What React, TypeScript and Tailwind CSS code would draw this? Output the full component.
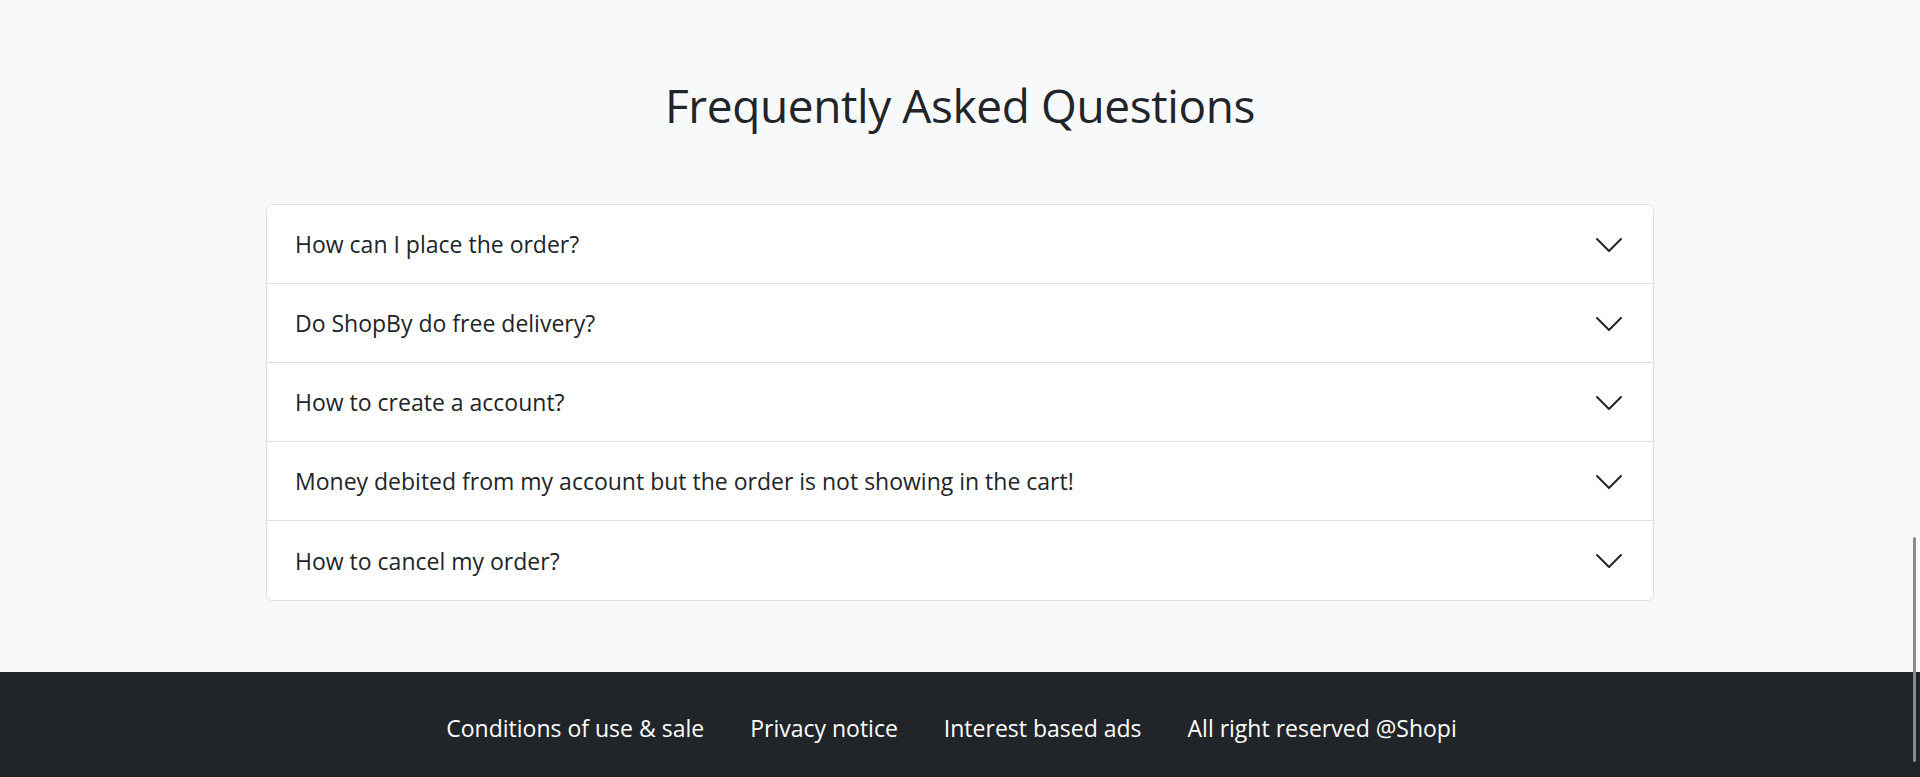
const faqs = [
  "How can I place the order?",
  "Do ShopBy do free delivery?",
  "How to create a account?",
  "Money debited from my account but the order is not showing in the cart!",
  "How to cancel my order?",
]

const footerLinks = [
  "Conditions of use & sale",
  "Privacy notice",
  "Interest based ads",
  "All right reserved @Shopi",
]

function Chevron() {
  return (
    <svg
      viewBox="0 0 16 16"
      className="w-8 h-8 shrink-0"
      fill="none"
      stroke="#212529"
      strokeWidth={1}
      strokeLinecap="round"
      strokeLinejoin="round"
    >
      <path d="M2 5L8 11L14 5" />
    </svg>
  )
}

export default function App() {
  return (
    <div
      className="relative min-h-[777px] flex flex-col bg-[#f8f9fa] text-[#212529]"
      style={{ fontFamily: '"Open Sans", "Noto Sans", sans-serif' }}
    >
      {/* FAQ section */}
      <section className="flex-1 pt-[78px] pb-[70px]">
        <h1 className="text-center text-[46px] leading-[1.2] tracking-[-0.4px] font-normal">
          Frequently Asked Questions
        </h1>

        <div className="mt-[71px] mx-auto w-[1388px] bg-white border border-[#dee2e6] rounded-md divide-y divide-[#dee2e6]">
          {faqs.map((q) => (
            <button
              key={q}
              className="w-full h-[79px] flex items-center justify-between pl-[28px] pr-[28px] pt-px text-left text-[23px]"
            >
              <span>{q}</span>
              <Chevron />
            </button>
          ))}
        </div>
      </section>

      {/* Footer */}
      <footer className="h-[105px] bg-[#212529] text-white flex items-center justify-center gap-[46px] text-[23px] pt-[7px] pr-[17px]">
        {footerLinks.map((l) => (
          <a key={l} href="#" className="leading-none">
            {l}
          </a>
        ))}
      </footer>

      {/* overlay scrollbar thumb */}
      <div className="absolute right-[4px] top-[537px] w-[3px] h-[225px] rounded-full bg-[#8a8a8a]" />
    </div>
  )
}
